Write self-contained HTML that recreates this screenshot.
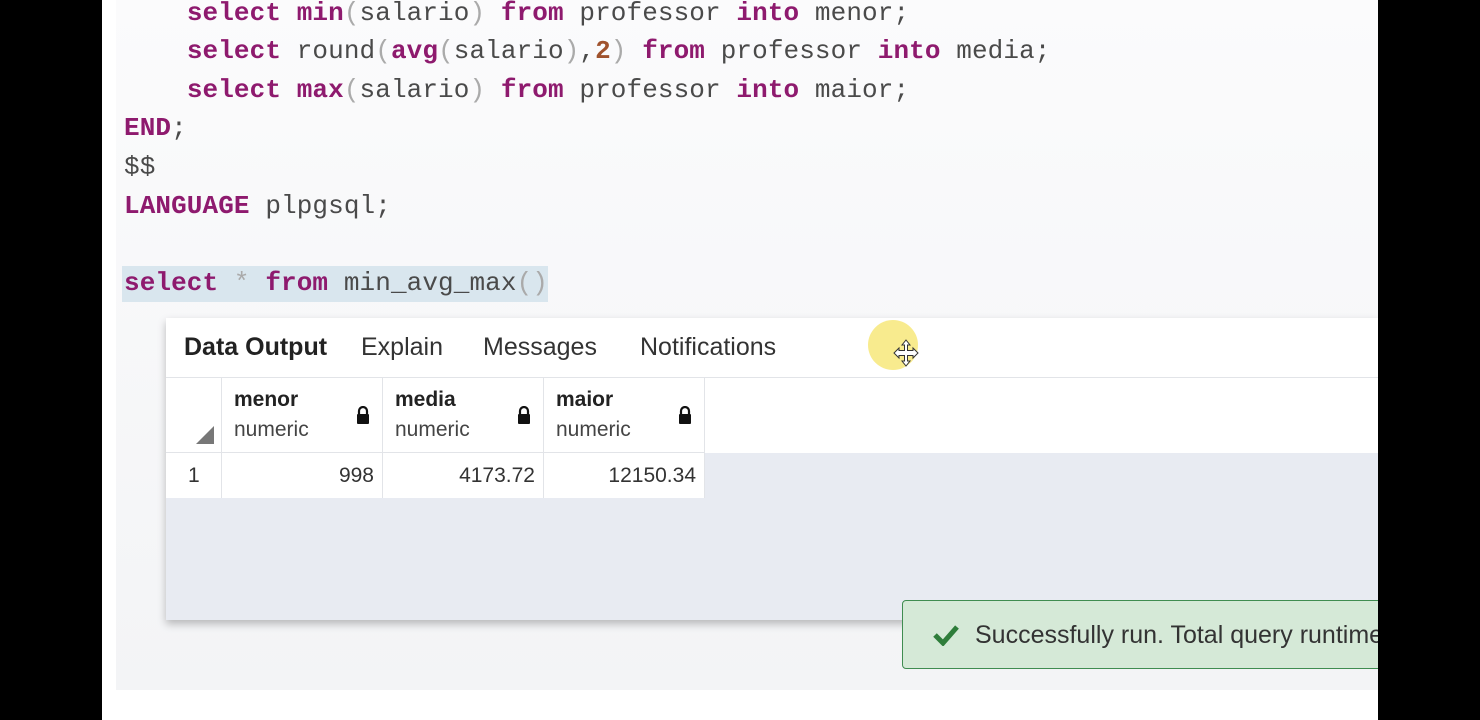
<!DOCTYPE html>
<html><head><style>
body{margin:0;width:1480px;height:720px;background:#000;position:relative;overflow:hidden;font-family:"Liberation Sans",sans-serif}
#main{position:absolute;left:102px;top:0;width:1276px;height:720px;background:#fff}
#ed{position:absolute;left:102px;top:0;width:1276px;height:690px;background:linear-gradient(#fbfbfc,#f3f4f6)}
#gut{position:absolute;left:102px;top:0;width:14px;height:690px;background:#fff}
.code{position:absolute;left:124px;font-family:"Liberation Mono",monospace;font-size:26px;color:#4a4a4a;white-space:pre;line-height:30px;letter-spacing:0.1px}
.k{color:#8e1a6e;font-weight:bold}
.p{color:#aaa}
.n{color:#a0522d;font-weight:bold}
#sel{position:absolute;left:122px;top:266px;width:426px;height:36px;background:#d9e6ee}
#panel{position:absolute;left:166px;top:318px;width:1212px;height:302px;background:#e8ebf2;box-shadow:0 4px 8px rgba(0,0,0,.25)}
#tabs{position:absolute;left:0;top:0;width:100%;height:59px;background:#fff;border-bottom:1px solid #e2e4e8}
.tab{position:absolute;top:15px;font-size:25px;color:#333}
#hdr{position:absolute;left:0;top:60px;width:100%;height:75px;background:#fff}
.cell{position:absolute;box-sizing:border-box;border-right:1px solid #e2e4e8;background:#fff}
.hn{position:absolute;left:12px;top:10px;font-size:21px;font-weight:bold;color:#222}
.ht{position:absolute;left:12px;top:40px;font-size:21px;color:#444}
.lock{position:absolute;right:12px;top:28px;width:14px;height:18px}
.v{position:absolute;right:8px;top:11px;font-size:21px;color:#333}
#toast{position:absolute;left:902px;top:600px;width:500px;height:69px;box-sizing:border-box;background:#d5e9d7;border:1px solid #3f8c50;border-radius:4px}
</style></head><body>
<div id="main"></div>
<div id="ed"></div>
<div id="gut"></div>
<div id="sel"></div>
<div class="code" style="top:-2px">    <span class="k">select</span> <span class="k">min</span><span class="p">(</span>salario<span class="p">)</span> <span class="k">from</span> professor <span class="k">into</span> menor;</div>
<div class="code" style="top:36px">    <span class="k">select</span> round<span class="p">(</span><span class="k">avg</span><span class="p">(</span>salario<span class="p">)</span>,<span class="n">2</span><span class="p">)</span> <span class="k">from</span> professor <span class="k">into</span> media;</div>
<div class="code" style="top:75px">    <span class="k">select</span> <span class="k">max</span><span class="p">(</span>salario<span class="p">)</span> <span class="k">from</span> professor <span class="k">into</span> maior;</div>
<div class="code" style="top:113px"><span class="k">END</span>;</div>
<div class="code" style="top:152px">$$</div>
<div class="code" style="top:191px"><span class="k">LANGUAGE</span> plpgsql;</div>
<div class="code" style="top:268px"><span class="k">select</span> <span class="p">*</span> <span class="k">from</span> min_avg_max<span class="p">()</span></div>
<div id="panel">
 <div id="tabs">
  <div class="tab" style="left:18px;font-weight:bold;color:#222">Data Output</div>
  <div class="tab" style="left:195px">Explain</div>
  <div class="tab" style="left:317px">Messages</div>
  <div class="tab" style="left:474px">Notifications</div>
 </div>
 <div id="hdr"></div>
 <div class="cell" style="left:0;top:60px;width:56px;height:75px;border-bottom:1px solid #e2e4e8"><svg style="position:absolute;left:30px;top:48px" width="18" height="18"><path d="M18 0V18H0Z" fill="#777"/></svg></div>
 <div class="cell" style="left:56px;top:60px;width:161px;height:75px;border-bottom:1px solid #e2e4e8"><div class="hn">menor</div><div class="ht">numeric</div><svg class="lock" viewBox="0 0 14 18"><path d="M3 8V5a4 4 0 0 1 8 0v3" stroke="#111" stroke-width="2.2" fill="none"/><rect x="1" y="8" width="12" height="10" rx="1" fill="#111"/></svg></div>
 <div class="cell" style="left:217px;top:60px;width:161px;height:75px;border-bottom:1px solid #e2e4e8"><div class="hn">media</div><div class="ht">numeric</div><svg class="lock" viewBox="0 0 14 18"><path d="M3 8V5a4 4 0 0 1 8 0v3" stroke="#111" stroke-width="2.2" fill="none"/><rect x="1" y="8" width="12" height="10" rx="1" fill="#111"/></svg></div>
 <div class="cell" style="left:378px;top:60px;width:161px;height:75px;border-bottom:1px solid #e2e4e8"><div class="hn">maior</div><div class="ht">numeric</div><svg class="lock" viewBox="0 0 14 18"><path d="M3 8V5a4 4 0 0 1 8 0v3" stroke="#111" stroke-width="2.2" fill="none"/><rect x="1" y="8" width="12" height="10" rx="1" fill="#111"/></svg></div>
 <div class="cell" style="left:0;top:135px;width:56px;height:45px"><div class="v" style="left:22px;right:auto">1</div></div>
 <div class="cell" style="left:56px;top:135px;width:161px;height:45px"><div class="v">998</div></div>
 <div class="cell" style="left:217px;top:135px;width:161px;height:45px"><div class="v">4173.72</div></div>
 <div class="cell" style="left:378px;top:135px;width:161px;height:45px"><div class="v">12150.34</div></div>
</div>
<div style="position:absolute;left:868px;top:320px;width:50px;height:50px;border-radius:50%;background:#f7e77a;opacity:.85"></div>
<svg style="position:absolute;left:892px;top:339px" width="28" height="28" viewBox="0 0 28 28"><path d="M14 1l4 5h-2.5v5.5H21V9l5 5-5 5v-2.5h-5.5V22H18l-4 5-4-5h2.5v-5.5H7V19l-5-5 5-5v2.5h5.5V6H10z" fill="#fff" stroke="#333" stroke-width="1"/></svg>
<div id="toast">
 <svg style="position:absolute;left:30px;top:23px" width="26" height="22" viewBox="0 0 26 22"><path d="M2 11l8 8L24 3" stroke="#2e7d3a" stroke-width="5" fill="none"/></svg>
 <div style="position:absolute;left:72px;top:20px;font-size:25px;color:#333;white-space:nowrap">Successfully run. Total query runtime</div>
</div>
<div style="position:absolute;left:1378px;top:0;width:102px;height:720px;background:#000"></div>
</body></html>
